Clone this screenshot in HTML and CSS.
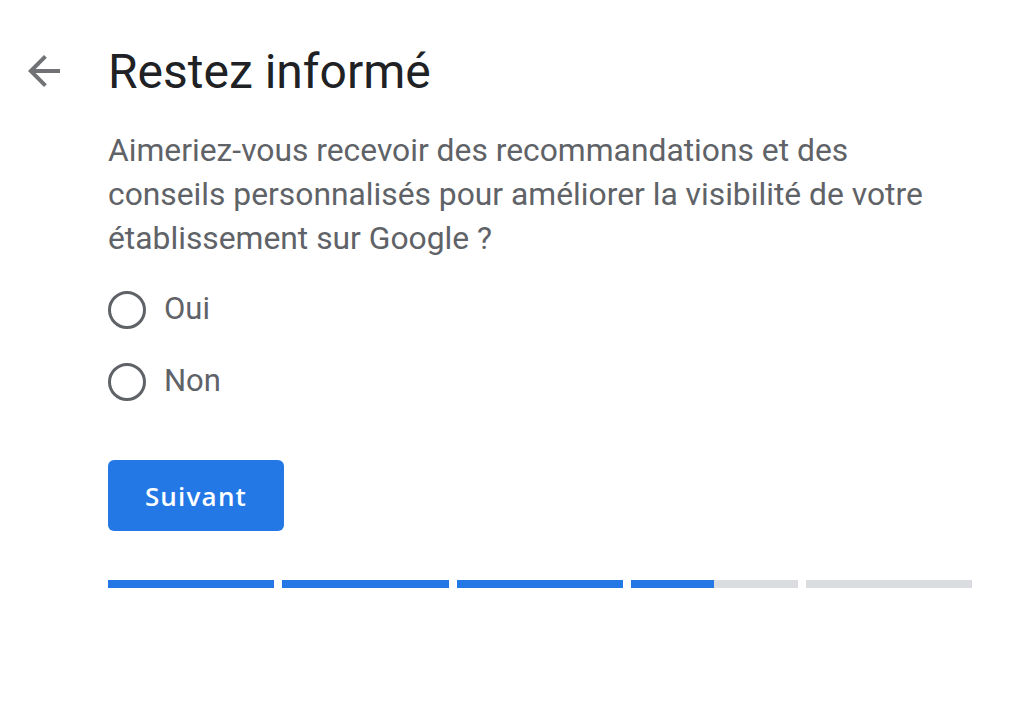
FILE: index.html
```html
<!DOCTYPE html>
<html lang="fr">
<head>
<meta charset="utf-8">
<title>Restez informé</title>
<link rel="stylesheet" href="styles.css">
</head>
<body>
<div class="page">
  <div class="back">
    <svg class="back-icon" viewBox="0 0 24 24" width="48" height="48"><path d="M20 11H7.83l5.59-5.59L12 4l-8 8 8 8 1.41-1.41L7.83 13H20v-2z" fill="#707275"/></svg>
  </div>
  <div class="content">
    <h1 class="title">Restez informé</h1>
    <p class="question">Aimeriez-vous recevoir des recommandations et des conseils personnalisés pour améliorer la visibilité de votre établissement sur Google ?</p>
    <div class="options">
      <label class="option"><span class="radio"></span><span class="label">Oui</span></label>
      <label class="option"><span class="radio"></span><span class="label">Non</span></label>
    </div>
    <button class="next">Suivant</button>
    <div class="progress">
      <div class="seg"><div class="fill" style="width:100%"></div></div>
      <div class="seg"><div class="fill" style="width:100%"></div></div>
      <div class="seg"><div class="fill" style="width:100%"></div></div>
      <div class="seg"><div class="fill" style="width:50%"></div></div>
      <div class="seg"><div class="fill" style="width:0%"></div></div>
    </div>
  </div>
</div>
</body>
</html>
```

FILE: styles.css
```css
html, body {
  margin: 0;
  padding: 0;
  background: #fff;
}
body {
  font-family: Roboto, "Liberation Sans", sans-serif;
}
.page {
  display: flex;
  padding-top: 44px;
}
.back {
  width: 108px;
  flex: none;
  padding-left: 20px;
  box-sizing: border-box;
  padding-top: 3px;
}
.back-icon {
  display: block;
}
.content {
  width: 864px;
}
.title {
  margin: 0;
  font-weight: 400;
  font-size: 48px;
  line-height: 56px;
  color: #202124;
}
.question {
  margin: 28px 0 0;
  font-size: 31.8px;
  line-height: 44px;
  color: #5f6368;
  width: 845px;
}
.options {
  margin-top: 31px;
  display: flex;
  flex-direction: column;
  gap: 34px;
}
.option {
  display: flex;
  align-items: center;
  gap: 18px;
  height: 38px;
}
.radio {
  width: 38px;
  height: 38px;
  box-sizing: border-box;
  border: 3px solid #5f6368;
  border-radius: 50%;
}
.label {
  font-size: 31px;
  color: #5f6368;
  position: relative;
  top: -2px;
}
.next {
  margin-top: 59px;
  display: block;
  width: 176px;
  height: 71px;
  border: none;
  border-radius: 6px;
  background: #2378e6;
  color: #fff;
  font-family: "Open Sans", Roboto, sans-serif;
  font-weight: 600;
  font-size: 26px;
  letter-spacing: 1.2px;
}
.progress {
  margin-top: 49px;
  display: flex;
  gap: 8px;
}
.seg {
  flex: 1;
  height: 8px;
  background: #dadce0;
}
.fill {
  height: 100%;
  background: #2378e6;
}
```
